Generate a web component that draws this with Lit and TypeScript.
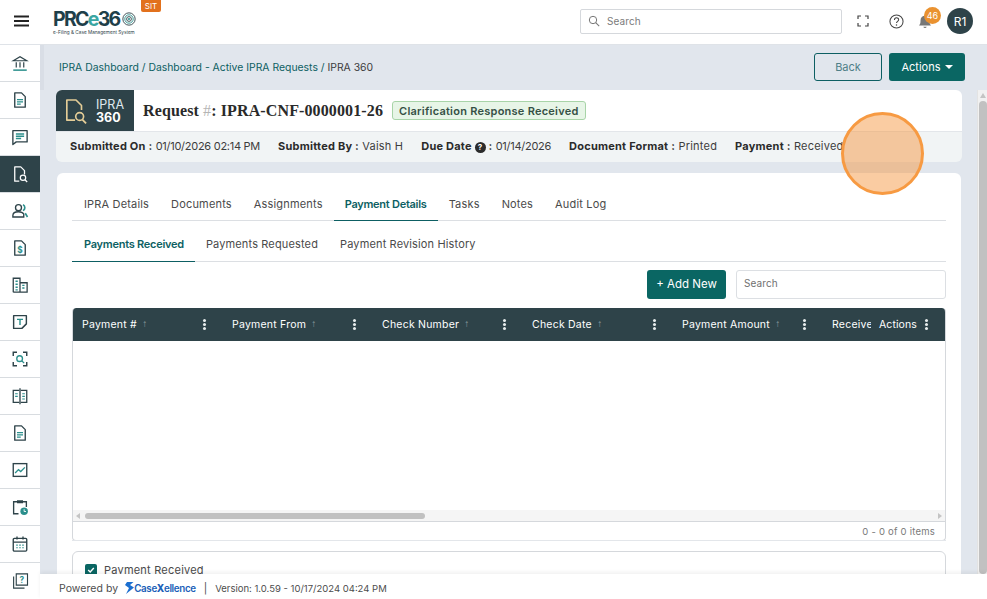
import { LitElement, html, css, svg } from "lit";
import { customElement } from "lit/decorators.js";

const D = "#2e4349";
const T = "#2b8f8c";
const sideIcons = [
  svg`<path d="M3 9 12 3.500 21 9Z" fill="none" stroke="${D}" stroke-width="1.600"/><path d="M7 11v7M12 11v7M17 11v7" stroke="${D}" stroke-width="1.600"/><path d="M3 21.500h18" stroke="${T}" stroke-width="2"/>`,
  svg`<path d="M5 2.500h9l5 5v14H5Z" fill="none" stroke="${D}" stroke-width="1.800" stroke-linejoin="round"/><path d="M8 11.500h8M8 14.500h8M8 17.500h5" stroke="${T}" stroke-width="1.700"/>`,
  svg`<path d="M2.500 3.500h19v15H7l-4.500 3.500Z" fill="none" stroke="${D}" stroke-width="1.800" stroke-linejoin="round"/><path d="M6.500 8h11M6.500 11h11M6.500 14h7" stroke="${T}" stroke-width="1.800"/>`,
  svg`<path d="M11 21.500H5V2.500h8l5 5v5" fill="none" stroke="#fff" stroke-width="1.700" stroke-linejoin="round"/><circle cx="16" cy="17" r="3.600" fill="none" stroke="#fff" stroke-width="1.600"/><path d="m18.600 19.600 3 3" stroke="#fff" stroke-width="1.700"/>`,
  svg`<circle cx="10" cy="7.500" r="4" fill="none" stroke="${D}" stroke-width="1.800"/><path d="M2.500 20v-2c0-3 3-5 7.500-5s6 1.500 7 3v4Z" fill="none" stroke="${D}" stroke-width="1.800"/><path d="M16 3.500a4.500 4.500 0 0 1 0 8M19 15l3 5" stroke="${T}" stroke-width="2.200" fill="none"/>`,
  svg`<path d="M5 2.500h9l5 5v14H5Z" fill="none" stroke="${D}" stroke-width="1.800" stroke-linejoin="round"/><text x="12" y="18.500" text-anchor="middle" font-size="11" font-weight="700" font-family="Inter, sans-serif" fill="${T}">$</text>`,
  svg`<path d="M3 21.500V3h9v18.500M12 9h9.500v12.500H3" fill="none" stroke="${D}" stroke-width="1.700"/><path d="M6 7h3M6 11h3M6 15h3M6 18.500h3M15 12.500h3M15 16h3" stroke="${T}" stroke-width="1.700"/>`,
  svg`<path d="M3.500 3.500h17v11l-6 6h-11Z" fill="none" stroke="${D}" stroke-width="1.900" stroke-linejoin="round"/><path d="M8 8.500h8M12 8.500v7.500" stroke="${T}" stroke-width="1.900"/>`,
  svg`<path d="M3 8V3h5M16 3h5v5M21 16v5h-5M8 21H3v-5" fill="none" stroke="${D}" stroke-width="1.900"/><circle cx="11.500" cy="11.500" r="3.800" fill="none" stroke="${T}" stroke-width="1.800"/><path d="m14.500 14.500 3 3" stroke="${T}" stroke-width="1.800"/>`,
  svg`<path d="M11 4.500H3v16h8M13 4.500h8v16h-8" fill="none" stroke="${D}" stroke-width="1.700"/><path d="M12 1.500v21.500" stroke="${D}" stroke-width="1.800"/><path d="M5.500 9H9M5.500 12.500H9M15 9h3.500M15 12.500h3.500M15 16h3.500" stroke="${T}" stroke-width="1.600"/>`,
  svg`<path d="M5 2.500h9l5 5v14H5Z" fill="none" stroke="${D}" stroke-width="1.800" stroke-linejoin="round"/><path d="M8 11.500h8M8 14.500h8M8 17.500h5" stroke="${T}" stroke-width="1.700"/>`,
  svg`<rect x="3" y="3.500" width="18" height="17" fill="none" stroke="${D}" stroke-width="1.800"/><path d="m5.500 16 4.500-4.500 3 2.500 5.500-5.500" fill="none" stroke="${T}" stroke-width="1.800"/>`,
  svg`<path d="M10 21H3.500V5H8M16 5h4.500v7" fill="none" stroke="${D}" stroke-width="1.800"/><path d="M8 3h8v4H8Z" fill="${D}"/><circle cx="17.500" cy="17.500" r="5" fill="${T}"/><path d="M17.500 15v3h2.500" stroke="#fff" stroke-width="1.200" fill="none"/>`,
  svg`<rect x="3" y="4.500" width="18" height="17" rx="1.500" fill="none" stroke="${D}" stroke-width="1.800"/><path d="M3 9.500h18M8 2v4M16 2v4" stroke="${D}" stroke-width="1.800"/><path d="M7 13.500h2M11 13.500h2M15 13.500h2M7 17h2M11 17h2M15 17h2" stroke="${T}" stroke-width="1.600"/>`,
  svg`<path d="M7 2.500h15v15H7Z" fill="none" stroke="${D}" stroke-width="1.500"/><path d="M3.500 6v15.500H18" fill="none" stroke="${D}" stroke-width="1.500"/><text x="14.500" y="14" text-anchor="middle" font-size="11" font-weight="700" font-family="Inter, sans-serif" fill="${T}">?</text>`,
];

const mainTabs = ["IPRA Details", "Documents", "Assignments", "Payment Details", "Tasks", "Notes", "Audit Log"];
const subTabs = ["Payments Received", "Payments Requested", "Payment Revision History"];
const cols = ["Payment #", "Payment From", "Check Number", "Check Date", "Payment Amount"];

@customElement("app-root")
export class AppRoot extends LitElement {
  static styles = css`
    :host { display: block; height: 599px; width: 987px; position: relative; overflow: hidden; font-family: Inter, "Liberation Sans", sans-serif; font-size: 11px; letter-spacing: 0.22px; color: #3d3d3d; background: #e1e6ed; }
    * { box-sizing: border-box; }
    .top { height: 45px; background: #fff; border-bottom: 1px solid #dfe3e8; display: flex; align-items: center; padding-bottom: 2px; }
    .burger { width: 42px; display: flex; justify-content: center; }
    .logo { margin-left: 11px; width: 88px; position: relative; align-self: flex-start; padding-top: 9px; }
    .logo-main { font-size: 19.500px; font-weight: 700; line-height: 20px; letter-spacing: -1.700px; color: #1f3f4a; display: flex; align-items: center; white-space: nowrap; }
    .logo-main i { font-style: normal; color: #3aa6a2; }
    .logo-main svg { flex: none; width: 14px; height: 14px; margin-left: 2px; }
    .logo-sub { font-size: 4.700px; letter-spacing: 0; line-height: 6px; color: #2e4349; white-space: nowrap; }
    .sit { position: absolute; left: 88px; top: 0; width: 20px; height: 12px; background: #e2711d; color: #fff; font-size: 8px; letter-spacing: 0; display: flex; align-items: center; justify-content: center; border-radius: 0 0 2px 2px; }
    .hsearch { margin-left: 439px; width: 262px; height: 25px; border: 1px solid #d5d8dc; border-radius: 2px; display: flex; align-items: center; padding-left: 7px; gap: 7px; color: #7b7b7b; font-size: 10px; letter-spacing: 0.1px; }
    .ticons { display: flex; align-items: center; margin-left: 15px; }
    .fs { width: 12px; height: 12px; }
    .help { width: 15px; height: 15px; margin-left: 20px; }
    .bell { margin-left: 14px; position: relative; width: 14px; height: 16px; }
    .badge { position: absolute; left: 6px; top: -6px; width: 17px; height: 17px; border-radius: 50%; background: #ea9230; color: #fff; font-size: 9px; letter-spacing: 0; display: flex; align-items: center; justify-content: center; }
    .avatar { margin-left: 15px; width: 26px; height: 26px; border-radius: 50%; background: #2e4349; color: #fff; font-size: 12px; letter-spacing: 0; display: flex; align-items: center; justify-content: center; }
    .body { display: flex; height: 554px; }
    .side { width: 40px; background: #fff; flex: none; }
    .side div { height: 37px; border-bottom: 1px solid #d8dce0; display: flex; align-items: center; justify-content: center; }
    .side div.on { background: #2e4349; }
    .side svg { width: 18px; height: 18px; }
    .col { flex: 1; display: flex; flex-direction: column; min-width: 0; }
    .mid { flex: 1; display: flex; min-height: 0; }
    .scroll { flex: 1; min-width: 0; overflow: hidden; padding: 8px 15px 0 16px; }
    .bar { width: 10px; margin-top: 45px; background: #f1f1f1; display: flex; flex-direction: column; align-items: center; padding-top: 3px; gap: 3px; border-left: 1px solid #e3e3e3; }
    .bar i { width: 0; height: 0; border-left: 3px solid transparent; border-right: 3px solid transparent; border-bottom: 5px solid #c4c4c4; }
    .bar span { display: block; width: 8px; flex: 1; background: #c1c1c1; border-radius: 4px; }
    .tick { position: absolute; left: 40px; top: 45px; width: 4px; height: 45px; background: #d9dee6; }
    .crumbrow { display: flex; align-items: center; height: 28px; margin-bottom: 9px; margin-right: -3px; padding-left: 3px; }
    .crumb { flex: 1; color: #0d5f63; font-size: 10.400px; letter-spacing: 0; }
    .crumb em { font-style: normal; color: #3d3d3d; }
    .btn { height: 28px; border-radius: 3px; display: flex; align-items: center; justify-content: center; font-size: 11px; letter-spacing: 0; }
    .back { width: 68px; border: 1px solid #0d5f63; color: #4f7f88; margin-right: 7px; }
    .act { width: 76px; background: #0a6663; color: #fff; gap: 4px; }
    .caret { width: 0; height: 0; border-left: 4px solid transparent; border-right: 4px solid transparent; border-top: 4px solid #fff; }
    .head { height: 41px; background: #fff; border-radius: 6px 6px 0 0; display: flex; align-items: center; overflow: hidden; }
    .hicon { width: 78px; height: 41px; background: #2e4349; display: flex; align-items: center; padding-left: 9px; gap: 9px; flex: none; }
    .hicon svg { width: 22px; height: 26px; flex: none; }
    .hicon div { color: #dfe9ee; font-size: 12.500px; line-height: 13px; letter-spacing: 0; }
    .hicon b { color: #fff; display: block; font-weight: 700; }
    .title { font-family: "Liberation Serif", serif; font-weight: 700; font-size: 16px; letter-spacing: 0.12px; color: #2a2a2a; margin-left: 9px; white-space: nowrap; }
    .title i { font-style: normal; color: #b5b5b5; font-weight: 400; }
    .chip { margin-left: 9px; height: 19px; padding: 0 6px; background: #e7f5e7; border: 1px solid #a8d4a8; border-radius: 3px; display: flex; align-items: center; font-weight: 600; color: #355045; font-size: 11px; letter-spacing: 0.25px; white-space: nowrap; }
    .info { height: 31px; background: #f1f4f5; border-top: 1px solid #e3e6ea; border-radius: 0 0 6px 6px; display: flex; align-items: center; padding: 0 0 2px 14px; gap: 18px; white-space: nowrap; overflow: hidden; margin-bottom: 11px; letter-spacing: 0.22px; }
    .info b { font-weight: 700; color: #2b2b2b; }
    .n { letter-spacing: -0.27px; }
    .q { display: inline-block; width: 11px; height: 11px; border-radius: 50%; background: #2b2b2b; color: #fff; font-size: 8px; font-weight: 700; line-height: 11px; text-align: center; letter-spacing: 0; }
    .card { background: #fff; margin: 0 1px; border-radius: 6px 6px 0 0; padding: 15px 15px 0; height: 420px; }
    .tabs { display: flex; height: 33px; border-bottom: 1px solid #dcdfe3; padding-left: 1px; letter-spacing: 0.17px; }
    .tabs.sub { height: 41px; padding-left: 0; letter-spacing: 0.14px; }
    .tab { padding: 0 11px; display: flex; align-items: center; color: #4a4a4a; margin-bottom: -1px; border-bottom: 1px solid transparent; white-space: nowrap; }
    .sub .tab { padding-top: 6px; }
    .sub .tab:first-child { padding-left: 12px; }
    .tab.on { color: #0d5f63; font-weight: 600; border-bottom-color: #0d5f63; letter-spacing: -0.26px; }
    .tools { display: flex; justify-content: flex-end; gap: 10px; padding-top: 8px; height: 46px; }
    .add { width: 79px; height: 29px; background: #0a6663; color: #fff; border-radius: 3px; display: flex; align-items: center; justify-content: center; font-size: 11.500px; letter-spacing: 0; padding-bottom: 1px; }
    .tsearch { width: 210px; height: 29px; border: 1px solid #dcdfe3; border-radius: 3px; display: flex; align-items: center; padding: 0 0 3px 7px; font-size: 10px; color: #707070; letter-spacing: 0.1px; }
    .grid { border: 1px solid #d5d8dc; border-top: 0; border-radius: 4px; height: 233px; display: flex; flex-direction: column; overflow: hidden; }
    .thead { height: 33px; background: #2e4349; display: flex; color: #fff; flex: none; border-radius: 4px 4px 0 0; margin: 0 -1px; font-size: 10.500px; }
    .cols { flex: 1; display: flex; overflow: hidden; min-width: 0; padding-left: 1px; }
    .th { flex: none; width: 150px; display: flex; align-items: center; padding: 0 17px 0 9px; white-space: nowrap; }
    .th .ar { margin-left: 6px; color: #6e8186; font-size: 8px; flex: 1; }
    .dots { width: 3px; height: 11px; display: flex; flex-direction: column; justify-content: space-between; align-items: center; flex: none; }
    .dots s { display: block; width: 3px; height: 3px; background: #e8eeee; border-radius: 50%; }
    .actions { width: 75px; flex: none; display: flex; align-items: center; padding-left: 8px; gap: 8px; letter-spacing: 0.1px; }
    .tbody { flex: 1; }
    .hbar { height: 11px; background: #f5f5f5; display: flex; align-items: center; padding: 0 3px; flex: none; }
    .hbar .tl { width: 0; height: 0; border-top: 3px solid transparent; border-bottom: 3px solid transparent; border-right: 4px solid #c4c4c4; }
    .hbar .tr { width: 0; height: 0; border-top: 3px solid transparent; border-bottom: 3px solid transparent; border-left: 4px solid #c4c4c4; margin-left: auto; }
    .hbar .th2 { width: 340px; height: 6px; background: #c1c1c1; border-radius: 3px; margin-left: 5px; }
    .pager { height: 19px; border-top: 1px solid #d5d8dc; display: flex; align-items: center; justify-content: flex-end; padding-right: 10px; font-size: 9.500px; color: #7a7a7a; flex: none; }
    .rule { height: 1px; background: #e3e6ea; margin-top: -1px; }
    .box { margin-top: 10px; border: 1px solid #d5d8dc; border-radius: 6px 6px 0 0; height: 40px; padding: 12px 12px 0; display: flex; align-items: flex-start; gap: 7px; color: #4a4a4a; line-height: 13px; }
    .ck { width: 12px; height: 12px; background: #0a6663; border-radius: 2px; display: flex; align-items: center; justify-content: center; flex: none; }
    .foot { height: 25px; background: #fff; box-shadow: 0 -2px 4px rgba(0,0,0,.06); display: flex; align-items: center; padding: 3px 0 0 19px; color: #4d4d4d; font-size: 10.500px; letter-spacing: 0.05px; z-index: 1; flex: none; white-space: nowrap; }
    .foot .brand { color: #1c5fb8; font-weight: 600; letter-spacing: -0.35px; font-size: 9.800px; }
    .foot .brand b { font-weight: 800; }
    .foot svg { width: 9px; height: 12px; margin: 0 0 0 7px; }
    .foot .sep { margin: 0 8px; }
    .foot .ver { font-size: 9.500px; letter-spacing: 0; }
    .spot { position: absolute; left: 841px; top: 112px; width: 83px; height: 83px; border-radius: 50%; background: rgba(245,148,60,.48); border: 3.500px solid #f79a42; z-index: 5; }
  `;

  render() {
    return html`
      <div class="top">
        <div class="burger"><svg width="15" height="12" viewBox="0 0 15 12"><path d="M0 1.500h15M0 6h15M0 10.500h15" stroke="#222" stroke-width="1.800"/></svg></div>
        <div class="logo">
          <div class="logo-main">PRC<i>e</i>36<svg viewBox="0 0 20 20"><g fill="none" stroke="${D}" stroke-width="1.300"><circle cx="10" cy="10" r="8.800"/><circle cx="10" cy="10" r="6" stroke="${T}"/><circle cx="10" cy="10" r="3.400"/></g><circle cx="10" cy="10" r="1.500" fill="${T}"/></svg></div>
          <div class="logo-sub">e-Filing &amp; Case Management System</div>
          <div class="sit">SIT</div>
        </div>
        <div class="hsearch"><svg width="12" height="12" viewBox="0 0 12 12"><circle cx="5" cy="5" r="3.700" fill="none" stroke="#777" stroke-width="1"/><path d="m7.700 7.700 3.500 3.500" stroke="#777" stroke-width="1.100"/></svg>Search</div>
        <div class="ticons">
          <svg class="fs" viewBox="0 0 12 12"><path d="M1 4V1h3M8 1h3v3M11 8v3H8M4 11H1V8" fill="none" stroke="#444" stroke-width="1.200"/></svg>
          <svg class="help" viewBox="0 0 16 16"><circle cx="8" cy="8" r="7" fill="none" stroke="#444" stroke-width="1.100"/><path d="M5.800 6.300c0-3 4.500-3 4.500-.2 0 1.800-2.300 1.700-2.300 3.600" fill="none" stroke="#444" stroke-width="1.100"/><circle cx="8" cy="11.800" r=".8" fill="#444"/></svg>
          <div class="bell"><svg width="14" height="16" viewBox="0 0 14 16"><path d="M1 12.500c1.500-1.500 1.500-3 1.500-5 0-3 2-4.800 4.500-4.800s4.500 1.800 4.500 4.800c0 2 0 3.500 1.500 5Z" fill="#777"/><path d="M5.300 13.800a1.800 1.800 0 0 0 3.400 0Z" fill="#777"/></svg><div class="badge">46</div></div>
          <div class="avatar">R1</div>
        </div>
      </div>
      <div class="body">
        <nav class="side">${sideIcons.map((ic, i) => html`<div class=${i === 3 ? "on" : ""}><svg viewBox="0 0 24 24">${ic}</svg></div>`)}</nav>
        <div class="col">
          <div class="mid">
            <div class="scroll">
              <div class="crumbrow">
                <div class="crumb">IPRA Dashboard / Dashboard - Active IPRA Requests / <em>IPRA 360</em></div>
                <div class="btn back">Back</div>
                <div class="btn act">Actions <span class="caret"></span></div>
              </div>
              <div class="head">
                <div class="hicon">
                  <svg viewBox="0 0 24 28"><path d="M11 24H2V2h10l6 6v5" fill="none" stroke="#e4cd97" stroke-width="1.800" stroke-linejoin="round"/><circle cx="16" cy="20" r="4.300" fill="none" stroke="#e4cd97" stroke-width="1.800"/><path d="m19 23.500 4 4" stroke="#e4cd97" stroke-width="2"/></svg>
                  <div>IPRA<b>360</b></div>
                </div>
                <div class="title">Request <i>#</i>: IPRA-CNF-0000001-26</div>
                <div class="chip">Clarification Response Received</div>
              </div>
              <div class="info">
                <span><b>Submitted On :</b> <span class="n">01/10/2026 02:14 PM</span></span>
                <span><b>Submitted By :</b> Vaish H</span>
                <span><b>Due Date <span class="q">?</span> :</b> <span class="n">01/14/2026</span></span>
                <span><b>Document Format :</b> Printed</span>
                <span><b>Payment :</b> Received</span>
              </div>
              <div class="card">
                <div class="tabs">${mainTabs.map((t, i) => html`<div class="tab ${i === 3 ? "on" : ""}">${t}</div>`)}</div>
                <div class="tabs sub">${subTabs.map((t, i) => html`<div class="tab ${i === 0 ? "on" : ""}">${t}</div>`)}</div>
                <div class="tools"><div class="add">+ Add New</div><div class="tsearch">Search</div></div>
                <div class="grid">
                  <div class="thead">
                    <div class="cols">
                      ${cols.map((c) => html`<div class="th">${c}<span class="ar">🠕</span><span class="dots"><s></s><s></s><s></s></span></div>`)}
                      <div class="th">Received Date</div>
                    </div>
                    <div class="actions">Actions <span class="dots"><s></s><s></s><s></s></span></div>
                  </div>
                  <div class="tbody"></div>
                  <div class="hbar"><span class="tl"></span><span class="th2"></span><span class="tr"></span></div>
                  <div class="pager">0 - 0 of 0 items</div>
                </div>
                <div class="rule"></div>
                <div class="box">
                  <span class="ck"><svg width="8" height="8" viewBox="0 0 8 8"><path d="m1.200 4 2 2 3.600-4" fill="none" stroke="#fff" stroke-width="1.400"/></svg></span>
                  Payment Received
                </div>
              </div>
            </div>
            <div class="bar"><i></i><span></span></div>
          </div>
          <div class="foot">
            Powered by
            <svg viewBox="0 0 9 12"><path d="M8.500 0H2L0 3l4 3-3 6 8-6.500L5 3Z" fill="#1c6fd0"/></svg>
            <span class="brand">Case<b>X</b>ellence</span>
            <span class="sep">|</span>
            <span class="ver">Version: 1.0.59 - 10/17/2024 04:24 PM</span>
          </div>
        </div>
      </div>
      <div class="tick"></div>
      <div class="spot"></div>
    `;
  }
}
